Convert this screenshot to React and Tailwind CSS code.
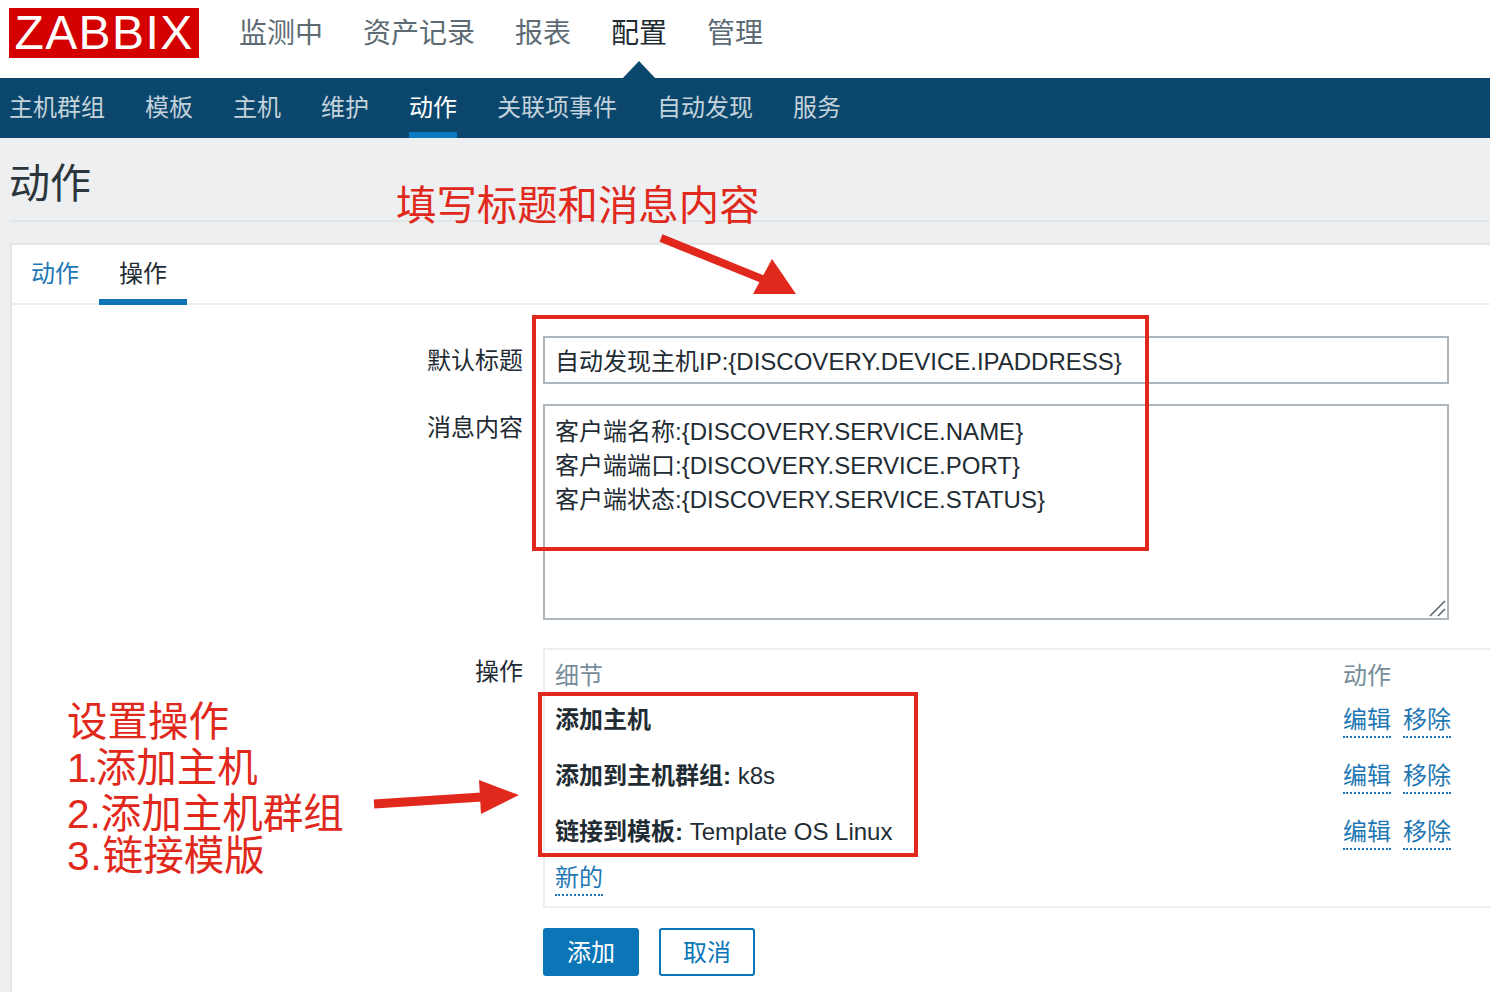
const NAV = ["监测中", "资产记录", "报表", "配置", "管理"];
const SUB = ["主机群组", "模板", "主机", "维护", "动作", "关联项事件", "自动发现", "服务"];
const OPS = [
  ["添加主机", ""],
  ["添加到主机群组:", " k8s"],
  ["链接到模板:", " Template OS Linux"],
];

function Dotted({ children }) {
  return (
    <a className="text-[#1f78b4] border-b-2 border-dotted border-[#1f78b4] leading-[32px] inline-block h-[34px]">
      {children}
    </a>
  );
}

export default function App() {
  return (
    <div className="relative w-[1490px] h-[992px] overflow-hidden bg-[#edeff1] text-[#1f2c33] font-['Liberation_Sans','Noto_Sans_CJK_SC',sans-serif]">
      <header className="relative h-[78px] bg-white flex items-start pl-[9px]">
        <div className="mt-[8px] w-[190px] h-[50px] bg-[#d40000] text-white text-[48px] leading-[50px] tracking-[1.4px] text-center">ZABBIX</div>
        <nav className="ml-[40px] flex gap-[40px] text-[28px] leading-[42px] mt-[13px] text-[#5d6b74]">
          {NAV.map((n) => (
            <span key={n} className={n === "配置" ? "text-[#1f2c33]" : ""}>{n}</span>
          ))}
        </nav>
        <svg className="absolute left-[622px] top-[61px]" width="34" height="18" viewBox="0 0 34 18">
          <path d="M0 18 L17 0 L34 18 Z" fill="#0b476c" />
        </svg>
      </header>

      <div className="h-[60px] bg-[#0b476c] flex gap-[40px] pl-[9px] text-[24px] text-[#c3d2db]">
        {SUB.map((s) => (
          <span key={s} className={s === "动作" ? "h-[60px] leading-[60px] text-white border-b-[6px] border-[#0b7ac0]" : "leading-[60px]"}>{s}</span>
        ))}
      </div>

      <div className="ml-[10px] h-[84px] border-b-2 border-[#e1e5e8]">
        <h1 className="-ml-[1px] text-[41px] leading-[60px] pt-[16px] text-[#2b363c]">动作</h1>
      </div>

      <main className="ml-[10px] mt-[21px] h-[760px] bg-white border-t-2 border-l-2 border-[#e3e7ea]">
        <div className="h-[60px] border-b-2 border-[#eceff1] flex pl-[19px] gap-[40px] text-[24px]">
          <span className="text-[#1f78b4] leading-[58px]">动作</span>
          <span className="relative leading-[58px] text-[#1f2c33]">
            操作
            <span className="absolute -left-[20px] -right-[20px] top-[54px] h-[6px] bg-[#0b76b7]" />
          </span>
        </div>

        <div className="mt-[31px] grid grid-cols-[511px_1fr] text-[24px] leading-[34px]">
          <div className="text-right pt-[8px]">默认标题</div>
          <div className="ml-[20px] mr-[41px] h-[48px] border-2 border-[#acb7bd] pl-[10px] leading-[48px]">
            自动发现主机IP:{"{DISCOVERY.DEVICE.IPADDRESS}"}
          </div>

          <div className="text-right mt-[20px] pt-[7px]">消息内容</div>
          <div className="relative mt-[20px] ml-[20px] mr-[41px] h-[216px] border-2 border-[#acb7bd] pl-[10px] pt-[9px]">
            <div>客户端名称:{"{DISCOVERY.SERVICE.NAME}"}</div>
            <div>客户端端口:{"{DISCOVERY.SERVICE.PORT}"}</div>
            <div>客户端状态:{"{DISCOVERY.SERVICE.STATUS}"}</div>
            <svg className="absolute right-0 bottom-0" width="18" height="18" viewBox="0 0 18 18">
              <path d="M1 16 L16 1 M9 16 L16 9" stroke="#5a646a" strokeWidth="1.6" fill="none" />
            </svg>
          </div>

          <div className="text-right mt-[28px] pt-[7px]">操作</div>
          <div className="mt-[28px] ml-[20px] h-[260px] border-t-2 border-l-2 border-b-2 border-[#eceff1] pl-[10px]">
            <div className="flex h-[50px] pt-[9px] text-[#768d99]">
              <span className="w-[788px]">细节</span>
              <span>动作</span>
            </div>
            {OPS.map(([b, r]) => (
              <div key={b} className="flex h-[56px] pt-[3px]">
                <span className="w-[788px]">
                  <b className="font-bold">{b}</b>{r}
                </span>
                <span className="flex gap-[12px] mt-[1px]">
                  <Dotted>编辑</Dotted>
                  <Dotted>移除</Dotted>
                </span>
              </div>
            ))}
            <div className="-mt-[7px]"><Dotted>新的</Dotted></div>
          </div>

          <div />
          <div className="mt-[20px] ml-[20px] flex gap-[20px]">
            <button className="w-[96px] h-[48px] pt-[2px] rounded-[3px] bg-[#0b76b7] text-white">添加</button>
            <button className="w-[96px] h-[48px] pt-[2px] rounded-[3px] border-2 border-[#0b76b7] text-[#0b76b7] bg-white">取消</button>
          </div>
        </div>
      </main>

      {/* annotations */}
      <div className="absolute left-[532px] top-[315px] w-[617px] h-[236px] border-4 border-[#e0291c]" />
      <div className="absolute left-[538px] top-[692px] w-[380px] h-[165px] border-4 border-[#e0291c]" />
      <div className="absolute left-[396px] top-[177px] text-[40.4px] leading-[58px] text-[#e0291c] whitespace-nowrap">填写标题和消息内容</div>
      <div className="absolute left-[67px] top-[699px] text-[40.5px] leading-[46px] text-[#e0291c] whitespace-nowrap">
        <div>设置操作</div>
        <div><span className="tracking-[-2.5px]">1.</span>添加主机</div>
        <div>2.添加主机群组</div>
        <div className="-mt-[4px]"><span className="tracking-[1px]">3.</span>链接模版</div>
      </div>
      <svg className="absolute left-[655px] top-[232px]" width="145" height="65" viewBox="0 0 145 65">
        <path d="M6 6 L112 49" stroke="#e0291c" strokeWidth="8" fill="none" />
        <path d="M141 62 L98 62 L117 27 Z" fill="#e0291c" />
      </svg>
      <svg className="absolute left-[370px] top-[778px]" width="152" height="40" viewBox="0 0 152 40">
        <path d="M4 26 L112 19" stroke="#e0291c" strokeWidth="9" fill="none" />
        <path d="M149 17 L109 2 L111 36 Z" fill="#e0291c" />
      </svg>
    </div>
  );
}
